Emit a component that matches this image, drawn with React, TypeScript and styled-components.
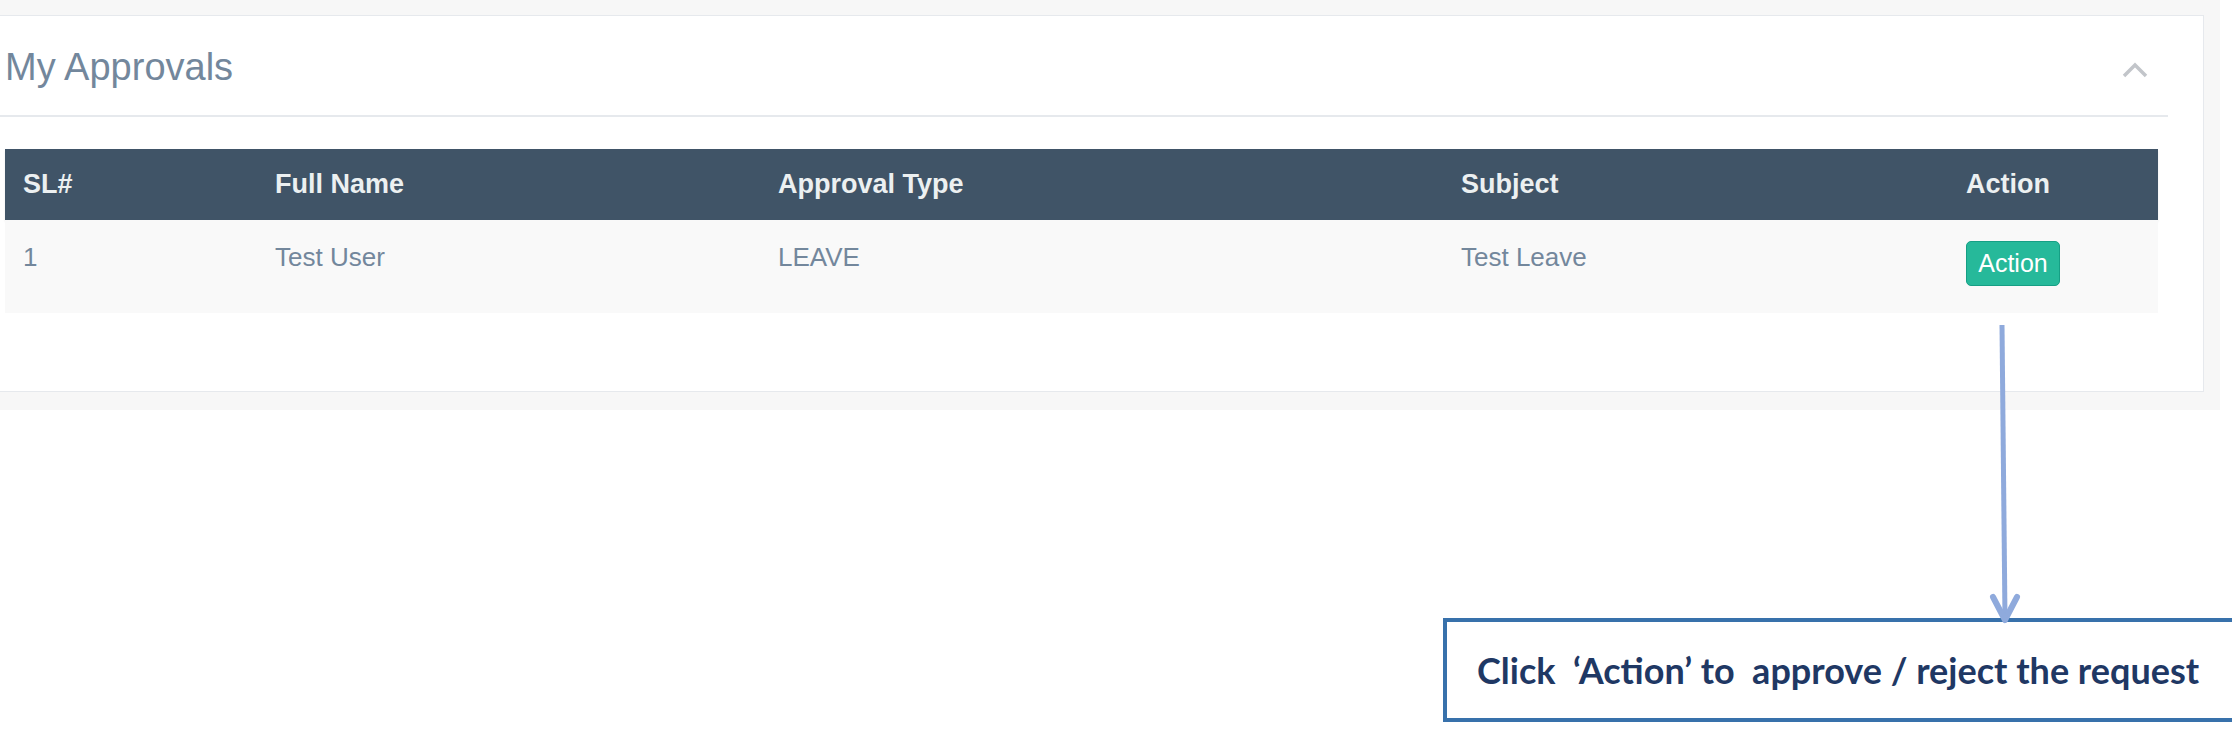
import React from "react";
import styled, { createGlobalStyle } from "styled-components";

const Global = createGlobalStyle`
  html, body { margin: 0; padding: 0; background: #ffffff; overflow: hidden; }
  body { font-family: "Liberation Sans", Arial, sans-serif; }
`;

const Stage = styled.div`
  position: relative;
  width: 2232px;
  height: 732px;
  overflow: hidden;
  background: #ffffff;
`;

const PageBand = styled.div`
  width: 2220px;
  box-sizing: border-box;
  background: #f7f7f7;
  padding: 15px 16px 18px 0;
`;

const Panel = styled.section`
  height: 377px;
  box-sizing: border-box;
  background: #ffffff;
  border: 1px solid #e6e9ed;
  border-left: none;
`;

const PanelHeader = styled.header`
  display: flex;
  align-items: center;
  justify-content: space-between;
  height: 101px;
  box-sizing: border-box;
  margin-right: 35px;
  padding: 3px 20px 0 5px;
  border-bottom: 2px solid #e6e9ed;
`;

const Title = styled.h2`
  margin: 0;
  font-family: "Liberation Sans", Arial, sans-serif;
  font-weight: 400;
  font-size: 38px;
  color: #73879c;
`;

const Collapse = styled.svg`
  width: 26px;
  height: 16px;
  margin-top: 6px;
`;

const Table = styled.div`
  margin: 32px 45px 0 5px;
`;

const Row = styled.div<{ $head?: boolean }>`
  display: grid;
  grid-template-columns: 252px 503px 683px 505px 1fr;
  box-sizing: border-box;
  height: ${(p) => (p.$head ? "71px" : "93px")};
  align-items: ${(p) => (p.$head ? "center" : "start")};
  background: ${(p) => (p.$head ? "#405467" : "#f9f9f9")};
  box-shadow: ${(p) => (p.$head ? "0 2px 2px rgba(0,0,0,0.08)" : "none")};
  position: relative;
`;

const HeadCell = styled.div`
  padding-left: 18px;
  font-size: 27px;
  font-weight: 700;
  color: #ecf0f1;
`;

const Cell = styled.div`
  padding: 19px 0 0 18px;
  font-size: 26px;
  line-height: 37px;
  color: #73879c;
`;

const ButtonCell = styled.div`
  padding: 21px 0 0 18px;
`;

const ActionButton = styled.button`
  width: 94px;
  height: 45px;
  box-sizing: border-box;
  padding: 0;
  border: 1px solid #169f85;
  border-radius: 5px;
  background: #26b99a;
  color: #ffffff;
  font-family: "Liberation Sans", Arial, sans-serif;
  font-size: 25px;
  line-height: 43px;
  text-align: center;
`;

const Callout = styled.div`
  margin: 208px 0 0 1443px;
  width: 820px;
  height: 104px;
  box-sizing: border-box;
  border: 4px solid #3871ab;
  display: flex;
  align-items: center;
  padding-left: 30px;
`;

const CalloutText = styled.span`
  font-family: Lato, "Open Sans", sans-serif;
  font-weight: 700;
  font-size: 36px;
  color: #1f3864;
  white-space: pre;
`;

const Arrow = styled.svg`
  position: absolute;
  left: 1985px;
  top: 320px;
  width: 40px;
  height: 310px;
  overflow: visible;
`;

const headers = ["SL#", "Full Name", "Approval Type", "Subject", "Action"];

export default function App() {
  return (
    <Stage>
      <Global />
      <PageBand>
        <Panel>
          <PanelHeader>
            <Title>My Approvals</Title>
            <Collapse viewBox="0 0 26 16">
              <polyline
                points="2,14 13,3 24,14"
                fill="none"
                stroke="#c2c5ca"
                strokeWidth="3.5"
              />
            </Collapse>
          </PanelHeader>
          <Table>
            <Row $head>
              {headers.map((h) => (
                <HeadCell key={h}>{h}</HeadCell>
              ))}
            </Row>
            <Row>
              <Cell>1</Cell>
              <Cell>Test User</Cell>
              <Cell>LEAVE</Cell>
              <Cell>Test Leave</Cell>
              <ButtonCell>
                <ActionButton>Action</ActionButton>
              </ButtonCell>
            </Row>
          </Table>
        </Panel>
      </PageBand>
      <Callout>
        <CalloutText>{"Click  \u2018Action\u2019 to  approve / reject the request"}</CalloutText>
      </Callout>
      <Arrow viewBox="0 0 40 310">
        <line x1="17" y1="5" x2="20" y2="299" stroke="#8faadc" strokeWidth="5" />
        <polyline
          points="8,277 20,300 32,277"
          fill="none"
          stroke="#8faadc"
          strokeWidth="6"
          strokeLinecap="round"
          strokeLinejoin="round"
        />
      </Arrow>
    </Stage>
  );
}
